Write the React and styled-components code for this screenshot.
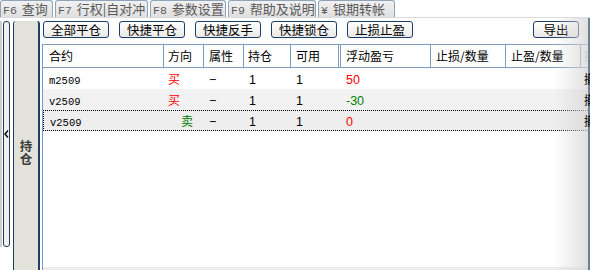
import React from 'react';
import styled, { createGlobalStyle } from 'styled-components';

const GlobalStyle = createGlobalStyle`
  html, body { margin: 0; padding: 0; background: #ffffff; }
  * { box-sizing: border-box; }
`;

const CJK = `"Noto Sans CJK SC", "Liberation Sans", sans-serif`;

const Root = styled.div`
  width: 590px;
  height: 270px;
  overflow: hidden;
  background: #ffffff;
  font-family: ${CJK};
  display: flex;
  flex-direction: column;
`;

// top function-key tabs
const TabBar = styled.div`
  height: 18px;
  display: flex;
  gap: 2px;
  border-bottom: 1px solid #d9dde2;
  flex-shrink: 0;
`;

const Tab = styled.div`
  width: ${p => p.$w}px;
  height: 17px;
  border: 1px solid #8fa4bb;
  border-bottom: none;
  border-radius: 3px 3px 0 0;
  background: linear-gradient(#f1f1f1, #dfdfdf);
  color: #5a5a5a;
  font-size: 13px;
  line-height: 15px;
  padding-left: 2px;
  white-space: nowrap;
  overflow: hidden;
`;

const Key = styled.span`
  font-family: "Liberation Mono", monospace;
  font-size: 11.5px;
  margin-right: 5px;
`;

const Body = styled.div`
  flex: 1;
  display: flex;
  min-height: 0;
`;

const Collapser = styled.div`
  width: 13px;
  padding: 3px 0 0 0;
  display: flex;
  flex-shrink: 0;
`;

const EdgeLine = styled.div`
  width: 2px;
  height: 226px;
  background: #cfcfcf;
`;

const CollapseBar = styled.div`
  margin-left: 1px;
  width: 7px;
  height: 226px;
  border: 1px solid #1f3c63;
  border-radius: 3px;
  background: #f2f1ed;
  display: flex;
  align-items: center;
  justify-content: center;
`;

const SidePanel = styled.div`
  margin-top: 3px;
  width: 27px;
  flex-shrink: 0;
  border-left: 1px solid #1f3c63;
  border-right: 2px solid #1f3c63;
  border-radius: 3px 3px 0 0;
  background: #e2e1da;
  display: flex;
  justify-content: center;
  padding-top: 119px;
`;

const SideLabel = styled.div`
  width: 13px;
  font-size: 12.5px;
  line-height: 12.5px;
  font-weight: 700;
  color: #3c3c3c;
  text-align: center;
`;

const Main = styled.div`
  position: relative;
  flex: 1;
  margin-left: 2px;
  display: flex;
  flex-direction: column;
  min-width: 0;
`;

const Toolbar = styled.div`
  display: flex;
  gap: 10px;
  padding: 3px 11px 0 1px;
  height: 26px;
  flex-shrink: 0;
`;

const Button = styled.button`
  width: ${p => p.$w || 66}px;
  height: 17px;
  margin-left: ${p => (p.$push ? 'auto' : '0')};
  padding: 0;
  border: 1px solid #1c3d6b;
  border-radius: 3px;
  background: linear-gradient(#ffffff, #e9e9e6);
  color: #000;
  font-family: ${CJK};
  font-size: 12.5px;
  line-height: 15px;
  cursor: pointer;
`;

const Grid = styled.div`
  flex: 1;
  display: flex;
  flex-direction: column;
  border-left: 1px solid #7f9db9;
  min-height: 0;
`;

const HeaderRow = styled.div`
  display: flex;
  height: 24px;
  border-top: 1px solid #7f9db9;
  border-bottom: 1px solid #7f9db9;
  flex-shrink: 0;
`;

const HeadCell = styled.div`
  width: ${p => p.$w}px;
  flex-shrink: 0;
  padding-left: ${p => p.$pad}px;
  border-right: ${p => (p.$double ? '3px double #7f9db9' : '1px solid #7f9db9')};
  font-size: 12px;
  line-height: 22px;
  color: ${p => p.$faint ? '#b8b8b8' : '#000'};
  white-space: nowrap;
  overflow: hidden;
`;

const Row = styled.div`
  display: flex;
  height: 21px;
  flex-shrink: 0;
  background: ${p => (p.$selected ? '#eeeeee' : p.$alt ? '#f2f2f2' : '#ffffff')};
  border: ${p => (p.$selected ? '1px dotted #000' : 'none')};
  border-right: none;
`;

const Cell = styled.div`
  width: ${p => p.$w}px;
  flex-shrink: 0;
  padding-left: ${p => p.$pad}px;
  font-size: 12px;
  line-height: ${p => (p.$selected ? 19 : 21)}px;
  color: ${p => p.$color || '#000'};
  white-space: nowrap;
  overflow: hidden;
  position: ${p => (p.$front ? 'relative' : 'static')};
  z-index: ${p => (p.$front ? 2 : 'auto')};
`;

const Code = styled.span`
  font-family: "Liberation Mono", monospace;
  font-size: 10.5px;
`;

const Num = styled.span`
  font-family: "Liberation Sans", sans-serif;
  font-size: 12.5px;
`;

const Filler = styled.div`
  flex: 1;
`;

const ScrollTrack = styled.div`
  height: 3px;
  background: #ececec;
  flex-shrink: 0;
`;

// right edge fade over the scrolled grid
const EdgeShade = styled.div`
  position: absolute;
  z-index: 1;
  top: 0;
  right: 0;
  bottom: 0;
  width: 36px;
  background: linear-gradient(to right, rgba(255, 255, 255, 0), rgba(214, 214, 214, 0.75));
  border-right: 2px solid #6e8093;
  pointer-events: none;
`;

const RED = '#ff0000';
const GREEN = '#008000';

const columns = [
  { key: 'code', title: '合约', w: 121, pad: 6 },
  { key: 'dir', title: '方向', w: 40, pad: 4 },
  { key: 'attr', title: '属性', w: 40, pad: 5 },
  { key: 'pos', title: '持仓', w: 47, pad: 4 },
  { key: 'avail', title: '可用', w: 50, pad: 5, double: true },
  { key: 'pnl', title: '浮动盈亏', w: 90, pad: 5 },
  { key: 'sl', title: '止损/数量', w: 75, pad: 5 },
  { key: 'tp', title: '止盈/数量', w: 75, pad: 5 },
  { key: 'op', title: '操作', w: 60, pad: 3, faint: true },
];

const rows = [
  { code: 'm2509', dir: '买', pos: 1, avail: 1, pnl: '50', pnlColor: RED },
  { code: 'v2509', dir: '买', pos: 1, avail: 1, pnl: '-30', pnlColor: GREEN },
  { code: 'v2509', dir: '卖', pos: 1, avail: 1, pnl: '0', pnlColor: RED },
];

const tabs = [
  { k: 'F6', label: '查询', w: 53 },
  { k: 'F7', label: '行权|自对冲', w: 93 },
  { k: 'F8', label: '参数设置', w: 76 },
  { k: 'F9', label: '帮助及说明', w: 88 },
  { k: '¥', label: '银期转帐', w: 77 },
];

function Chevron() {
  return (
    <svg width="5" height="8" viewBox="0 0 5 8">
      <polyline points="4,0.5 1,4 4,7.5" fill="none" stroke="#000" strokeWidth="1.4" />
    </svg>
  );
}

function PositionRow({ row, index }) {
  const selected = index === 2;
  const sell = row.dir === '卖';
  const w = i => columns[i].w - (selected && i === 0 ? 1 : 0);
  return (
    <Row $alt={index === 1} $selected={selected}>
      <Cell $w={w(0)} $pad={6} $selected={selected}><Code>{row.code}</Code></Cell>
      <Cell $w={w(1)} $pad={sell ? 17 : 4} $selected={selected} $color={sell ? GREEN : RED}>{row.dir}</Cell>
      <Cell $w={w(2)} $pad={5} $selected={selected}><Num>−</Num></Cell>
      <Cell $w={w(3)} $pad={5} $selected={selected}><Num>{row.pos}</Num></Cell>
      <Cell $w={w(4)} $pad={5} $selected={selected}><Num>{row.avail}</Num></Cell>
      <Cell $w={w(5)} $pad={5} $selected={selected} $color={row.pnlColor}><Num>{row.pnl}</Num></Cell>
      <Cell $w={w(6)} $pad={5} $selected={selected} />
      <Cell $w={w(7)} $pad={5} $selected={selected} />
      <Cell $w={w(8)} $pad={3} $selected={selected} $front>撤单</Cell>
    </Row>
  );
}

export default function App() {
  return (
    <Root>
      <GlobalStyle />
      <TabBar>
        {tabs.map(t => (
          <Tab key={t.k} $w={t.w}>
            <Key>{t.k}</Key>{t.label}
          </Tab>
        ))}
      </TabBar>
      <Body>
        <Collapser>
          <EdgeLine />
          <CollapseBar><Chevron /></CollapseBar>
        </Collapser>
        <SidePanel>
          <SideLabel>持仓</SideLabel>
        </SidePanel>
        <Main>
          <Toolbar>
            <Button>全部平仓</Button>
            <Button>快捷平仓</Button>
            <Button>快捷反手</Button>
            <Button>快捷锁仓</Button>
            <Button>止损止盈</Button>
            <Button $w={46} $push>导出</Button>
          </Toolbar>
          <Grid>
            <HeaderRow>
              {columns.map(c => (
                <HeadCell key={c.key} $w={c.w} $pad={c.pad} $double={c.double} $faint={c.faint}>{c.title}</HeadCell>
              ))}
            </HeaderRow>
            {rows.map((r, i) => (
              <PositionRow key={i} row={r} index={i} />
            ))}
            <Filler />
            <ScrollTrack />
          </Grid>
          <EdgeShade />
        </Main>
      </Body>
    </Root>
  );
}
